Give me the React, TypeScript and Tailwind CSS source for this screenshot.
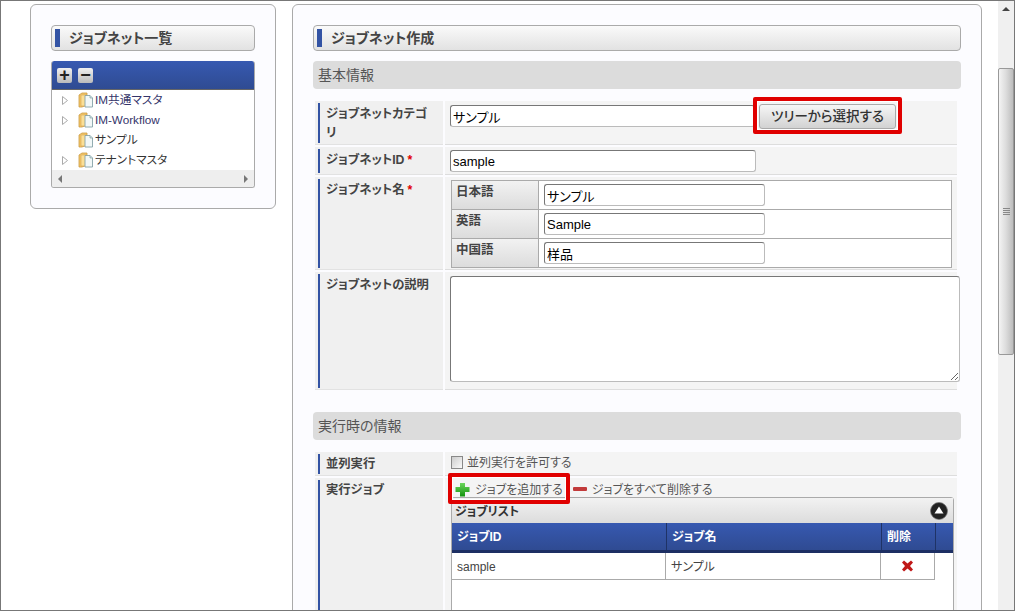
import type { ReactNode } from "react";

const jp = `[font-family:"Liberation_Sans","Noto_Sans_CJK_JP",sans-serif] [font-feature-settings:"palt"]`;

function Folder() {
  return (
    <svg width="15" height="16" viewBox="0 0 15 16" className="shrink-0">
      <path d="M1 3 L4 1 H9 V13 L4 15 H1 Z" fill="#f5c868" stroke="#c99a45" strokeWidth="0.8" />
      <path d="M3 3 H9 V14 H3 Z" fill="#fbdf95" stroke="#d3a657" strokeWidth="0.6" />
      <path d="M7 3.5 H12 L14.5 6 V15 H7 Z" fill="#f2f8f8" stroke="#86a3a8" strokeWidth="0.9" />
      <path d="M12 3.5 V6 H14.5" fill="#cfe0e2" stroke="#86a3a8" strokeWidth="0.7" />
    </svg>
  );
}

function TreeRow({ label, arrow = true, tint = false }: { label: string; arrow?: boolean; tint?: boolean }) {
  return (
    <div className="flex h-5 items-center pl-[10px]">
      <svg width="6" height="9" viewBox="0 0 6 9" className="shrink-0">
        {arrow && <path d="M0.5 0.5 L5.5 4.5 L0.5 8.5 Z" fill="#fff" stroke="#aaa" />}
      </svg>
      <span className="ml-[10px]"><Folder /></span>
      <span className={`ml-[2px] text-[11.7px] leading-none ${tint ? "text-[#34346a]" : "text-[#333]"}`}>{label}</span>
    </div>
  );
}

function TitleBar({ children }: { children: ReactNode }) {
  return (
    <div className="flex h-[26px] items-center rounded-[4px] border border-[#aaa] bg-gradient-to-b from-[#fafafa] to-[#e2e2e2] pl-[3px]">
      <span className="h-[18px] w-[5px] bg-[#3353a4]" />
      <span className="ml-[9px] text-[14px] font-bold text-[#444]">{children}</span>
    </div>
  );
}

function SectionBar({ children }: { children: ReactNode }) {
  return (
    <div className="flex h-[28px] items-center rounded-[4px] bg-[#dcdcdc] pl-[5px] text-[14px] text-[#555]">
      {children}
    </div>
  );
}

function Row({ label, req, h, labelTop = "pt-[2px]", className = "", children }: { label: ReactNode; req?: boolean; h: string; labelTop?: string; className?: string; children: ReactNode }) {
  return (
    <div className={`ml-[2px] grid w-[642px] grid-cols-[128px_512px] gap-x-[2px] ${h} ${className}`}>
      <div className="border-b border-[#e2e2e2] bg-[#f0f0f0] pb-[1px] pl-[3px] pt-[2px]">
        <div className={`h-full border-l-2 border-[#3353a4] pl-[6px] ${labelTop} text-[12.3px] font-bold leading-[19px] text-[#444]`}>
          {label}
          {req && <span className="ml-[3px] text-[#e00000]">*</span>}
        </div>
      </div>
      <div className="border-b border-[#ddd] bg-[#f4f4f4] pl-[5px]">{children}</div>
    </div>
  );
}

function Field({ value, w }: { value: string; w: string }) {
  return (
    <input
      readOnly
      value={value}
      className={`block h-[22px] ${w} rounded-[3px] border border-[#bbb] border-l-[#777] border-t-[#777] bg-white px-[2px] text-[13px] text-black outline-none`}
    />
  );
}

function LangRow({ label, value, last }: { label: string; value: string; last?: boolean }) {
  return (
    <div className={`flex ${last ? "h-[28px]" : "h-[29px] border-b border-[#aaa]"}`}>
      <div className="w-[87px] border-r border-[#aaa] bg-gradient-to-b from-[#f2f2f2] to-[#dcdcdc] pl-[4px] pt-[2px] text-[12.5px] font-bold text-[#444]">
        {label}
      </div>
      <div className="flex-1 bg-white pl-[5px] pt-[3px]">
        <Field value={value} w="w-[221px]" />
      </div>
    </div>
  );
}

function PlusIcon() {
  return (
    <svg width="15" height="15" viewBox="0 0 15 15" className="shrink-0">
      <defs>
        <linearGradient id="plusGreen" x1="0" y1="0" x2="0" y2="1">
          <stop offset="0" stopColor="#6cd65c" />
          <stop offset="1" stopColor="#14930f" />
        </linearGradient>
      </defs>
      <path d="M5 1 H10 V5 H14.5 V10 H10 V14.5 H5 V10 H0.5 V5 H5 Z" fill="url(#plusGreen)" />
    </svg>
  );
}

function JobTable() {
  const th = "h-full border-r border-[#1f3366] pl-[5px] pt-[5px] text-[12px] font-bold text-white";
  return (
    <div className="ml-[1px] mt-[1px] h-[200px] w-[503px] rounded-t-[3px] border border-[#aaa] bg-white">
      <div className="flex h-[25px] items-center justify-between bg-gradient-to-b from-[#f2f2f2] to-[#dcdcdc] pl-[3px] pr-[5px]">
        <span className="pt-[2px] text-[12px] font-bold text-[#333]">ジョブリスト</span>
        <svg width="18" height="18" viewBox="0 0 18 18">
          <circle cx="9" cy="9" r="8.5" fill="#222" stroke="#777" strokeWidth="0.7" />
          <path d="M9 4.5 L13.5 11.5 H4.5 Z" fill="#fff" />
        </svg>
      </div>
      <div className="grid h-[30px] grid-cols-[215px_215px_54px_1fr] border-b-[3px] border-[#1d2f63] bg-gradient-to-b from-[#3759b1] to-[#2f4b92]">
        <div className={th}>ジョブID</div>
        <div className={th}>ジョブ名</div>
        <div className={th}>削除</div>
        <div />
      </div>
      <div className="-ml-px grid h-[27px] w-[484px] grid-cols-[214px_215px_1fr] border-x border-b border-[#aaa] text-[12px] text-[#444]">
        <div className="flex items-center border-r border-[#aaa] pl-[5px] pt-[2px]">sample</div>
        <div className="flex items-center border-r border-[#aaa] pl-[5px] pt-[2px]">サンプル</div>
        <div className="flex items-center justify-center">
          <svg width="13" height="12" viewBox="0 0 13 12">
            <path d="M1 2.5 L3 0.5 L6.5 3.5 L10 0.5 L12 2.5 L9 6 L12 9.5 L10 11.5 L6.5 8.5 L3 11.5 L1 9.5 L4 6 Z" fill="#c01818" />
          </svg>
        </div>
      </div>
    </div>
  );
}

function Scrollbar() {
  return (
    <div className="flex w-[16px] shrink-0 flex-col items-center bg-[#f0f0f0]">
      <div className="mt-[6px] h-0 w-0 border-x-[4px] border-b-[4px] border-x-transparent border-b-[#444]" />
      <div className="mt-[57px] flex h-[287px] w-full flex-col items-center justify-center gap-[1px] rounded-[2px] border border-[#999] bg-gradient-to-r from-[#f4f4f4] via-[#dcdcdc] to-[#bdbdbd]">
        <div className="h-px w-[7px] bg-[#888]" />
        <div className="h-px w-[7px] bg-[#888]" />
        <div className="h-px w-[7px] bg-[#888]" />
        <div className="h-px w-[7px] bg-[#888]" />
      </div>
    </div>
  );
}

export default function App() {
  return (
    <div className={`flex h-[611px] w-[1015px] overflow-hidden border border-[#777] bg-white ${jp}`}>
      <div className="flex min-w-0 flex-1 gap-[16px] pl-[29px] pt-[3px]">
        {/* job net list */}
        <aside className="h-[205px] w-[246px] shrink-0 rounded-[6px] border border-[#aaa] bg-[#fcfcff] px-[20px] pt-[20px]">
          <TitleBar>ジョブネット一覧</TitleBar>
          <div className="mt-[10px] overflow-hidden rounded-[3px] border-x border-b border-[#aaa] bg-white">
            <div className="-mx-px flex h-[29px] items-center gap-[6px] rounded-t-[3px] border-b border-[#666] bg-gradient-to-b from-[#3759b1] to-[#2f4b92] pl-[6px]">
              <span className="flex h-[15px] w-[15px] items-center justify-center rounded-[2px] bg-gradient-to-b from-[#f0f0f0] to-[#bbb] text-[18px] font-bold leading-none text-[#222]">+</span>
              <span className="flex h-[15px] w-[15px] items-center justify-center rounded-[2px] bg-gradient-to-b from-[#f0f0f0] to-[#bbb] text-[18px] font-bold leading-none text-[#222]">−</span>
            </div>
            <div>
              <TreeRow label="IM共通マスタ" tint />
              <TreeRow label="IM-Workflow" tint />
              <TreeRow label="サンプル" arrow={false} />
              <TreeRow label="テナントマスタ" />
            </div>
            <div className="flex h-[17px] items-center justify-between bg-[#eee] px-[6px]">
              <span className="h-0 w-0 border-y-[4px] border-r-[4px] border-y-transparent border-r-[#777]" />
              <span className="h-0 w-0 border-y-[4px] border-l-[4px] border-y-transparent border-l-[#777]" />
            </div>
          </div>
        </aside>

        {/* create form */}
        <main className="h-[640px] w-[690px] shrink-0 rounded-[6px] border border-[#aaa] bg-[#fcfcff] px-[20px] pt-[20px]">
          <TitleBar>ジョブネット作成</TitleBar>
          <div className="mt-[10px]"><SectionBar>基本情報</SectionBar></div>

          <Row className="mt-[12px]" h="h-[44px]" label={<>ジョブネットカテゴ<br />リ</>}>
            <div className="flex items-start pt-[4px]">
              <Field value="サンプル" w="w-[305px]" />
              <button className="relative ml-[4px] -mt-px h-[25px] w-[137px] rounded-[3px] border border-[#aaa] bg-gradient-to-b from-[#f6f6f6] to-[#d2d2d2] pt-[1px] text-[13.5px] font-medium text-[#333]">
                ツリーから選択する
                <span className="absolute inset-x-[-7px] bottom-[-6px] top-[-8px] rounded-[2px] border-[4px] border-[#e00000] shadow-[inset_0_0_0_1px_#fff]" />
              </button>
            </div>
          </Row>
          <Row className="mt-[2px]" h="h-[28px]" label="ジョブネットID" req>
            <div className="pt-[3px]"><Field value="sample" w="w-[306px]" /></div>
          </Row>
          <Row className="mt-[2px]" h="h-[93px]" label="ジョブネット名" req>
            <div className="ml-[1px] mt-[3px] w-[501px] border border-[#aaa]">
              <LangRow label="日本語" value="サンプル" />
              <LangRow label="英語" value="Sample" />
              <LangRow label="中国語" value="样品" last />
            </div>
          </Row>
          <Row className="mt-[2px]" h="h-[118px]" label="ジョブネットの説明">
            <textarea readOnly className="mt-[4px] h-[106px] w-[510px] rounded-[3px] border border-[#bbb] border-l-[#777] border-t-[#777] bg-white outline-none" />
          </Row>

          <div className="mt-[22px]"><SectionBar>実行時の情報</SectionBar></div>

          <Row className="mt-[12px]" h="h-[24px]" labelTop="pt-[1px]" label="並列実行">
            <label className="flex h-full items-center gap-[4px] pb-[2px] pl-[1px] text-[12px] text-[#555]">
              <span className="h-[13px] w-[12px] border border-[#888] bg-gradient-to-br from-[#ccc] to-[#fafafa]" />
              並列実行を許可する
            </label>
          </Row>
          <Row className="mt-[2px]" h="h-[140px]" labelTop="pt-[1px]" label="実行ジョブ">
            <div className="flex h-[18px] items-center pl-[5px] pt-[4px] text-[12px] text-[#555]">
              <span className="relative flex items-center gap-[5px]">
                <PlusIcon />
                <span className="pt-[1px]">ジョブを追加する</span>
                <span className="absolute inset-x-[-7px] bottom-[-5px] top-[-7px] rounded-[2px] border-[4px] border-[#e00000] shadow-[inset_0_0_0_1px_#fff]" />
              </span>
              <span className="ml-[10px] h-[4px] w-[14px] rounded-[1px] bg-[#c23a3a]" />
              <span className="ml-[5px] pt-[1px]">ジョブをすべて削除する</span>
            </div>
            <JobTable />
          </Row>
        </main>
      </div>
      <Scrollbar />
    </div>
  );
}
